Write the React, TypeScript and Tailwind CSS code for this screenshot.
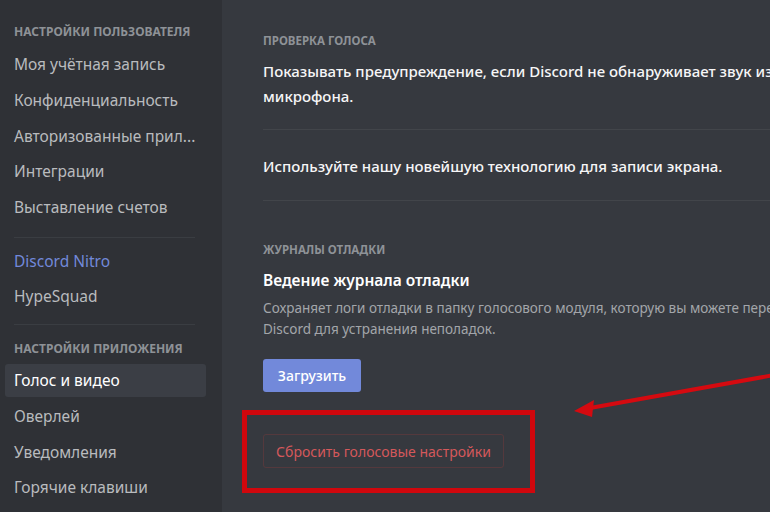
import { FC } from "react";

const font = { fontFamily: '"Noto Sans", "Open Sans", sans-serif' };

type NavItemProps = {
  label: string;
  active?: boolean;
  accent?: boolean;
};

const NavItem: FC<NavItemProps> = ({ label, active, accent }) => {
  return (
    <div
      className={`ml-[5px] w-[201px] h-[33px] mb-[2.7px] flex items-center px-[9px] rounded-[3px] text-[15.5px] whitespace-nowrap ${
        active ? "bg-[#3b3e45] text-white" : accent ? "text-[#7289da]" : "text-[#b9bbbe]"
      }`}
    >
      {label}
    </div>
  );
};

const Header: FC<{ label: string }> = ({ label }) => (
  <div className="px-[14px] text-[12px] font-bold text-[#8e9297] leading-[16px] h-[16px]">{label}</div>
);

const Divider = () => <div className="ml-[14px] w-[181px] h-px bg-[#3a3d42]" />;

export default function App() {
  return (
    <div className="relative w-[770px] h-[512px] overflow-hidden flex bg-[#36393f]" style={font}>
      <div className="w-[222px] shrink-0 bg-[#2f3136] pt-[24px]">
        <Header label="НАСТРОЙКИ ПОЛЬЗОВАТЕЛЯ" />
        <div className="mt-[8.5px]">
          <NavItem label="Моя учётная запись" />
          <NavItem label="Конфиденциальность" />
          <NavItem label="Авторизованные прил..." />
          <NavItem label="Интеграции" />
          <NavItem label="Выставление счетов" />
        </div>
        <div className="mt-[13px] mb-[6.5px]">
          <Divider />
        </div>
        <NavItem label="Discord Nitro" accent />
        <NavItem label="HypeSquad" />
        <div className="mt-[11px] mb-[16px]">
          <Divider />
        </div>
        <Header label="НАСТРОЙКИ ПРИЛОЖЕНИЯ" />
        <div className="mt-[7px]">
          <NavItem label="Голос и видео" active />
          <NavItem label="Оверлей" />
          <NavItem label="Уведомления" />
          <NavItem label="Горячие клавиши" />
        </div>
      </div>

      <div className="flex-1 overflow-hidden pl-[41px] pt-[33px]">
        <div className="w-[620px]">
          <div className="text-[11.5px] font-bold text-[#8e9297] leading-[16px]">ПРОВЕРКА ГОЛОСА</div>
          <div className="mt-[10px] text-[15px] font-medium text-[#f6f6f7] leading-[25px]">
            Показывать предупреждение, если Discord не обнаруживает звук из
            <br />
            микрофона.
          </div>
          <div className="mt-[20px] h-px bg-[#42454a]" />
          <div className="pt-[24px] pb-[21px] text-[15px] font-medium text-[#f6f6f7] leading-[25px]">
            Используйте нашу новейшую технологию для записи экрана.
          </div>
          <div className="h-px bg-[#42454a]" />

          <div className="mt-[41px] text-[11.5px] font-bold text-[#8e9297] leading-[16px]">ЖУРНАЛЫ ОТЛАДКИ</div>
          <div className="mt-[12px] text-[15.5px] font-semibold text-white leading-[20px]">
            Ведение журнала отладки
          </div>
          <div className="mt-[8px] text-[13.5px] text-[#a3a6aa] leading-[21px]">
            Сохраняет логи отладки в папку голосового модуля, которую вы можете передать
            <br />
            Discord для устранения неполадок.
          </div>
          <button className="mt-[19px] w-[98px] h-[33px] rounded-[3px] bg-[#7289da] text-white text-[14px] font-medium">
            Загрузить
          </button>
          <button className="mt-[42px] block w-[241px] h-[34px] rounded-[3px] border border-[#54393d] text-[#d4585b] text-[14px]">
            Сбросить голосовые настройки
          </button>
        </div>
      </div>

      {/* annotation overlay */}
      <div className="absolute left-[242px] top-[410px] w-[293px] h-[83px] border-[5px] border-[#d0070d]" />
      <svg className="absolute left-0 top-0" width="770" height="512">
        <line x1="780" y1="374" x2="590" y2="408" stroke="#d50a10" strokeWidth="4" />
        <polygon points="574,411 594,400 592,417" fill="#d50a10" />
      </svg>
    </div>
  );
}
